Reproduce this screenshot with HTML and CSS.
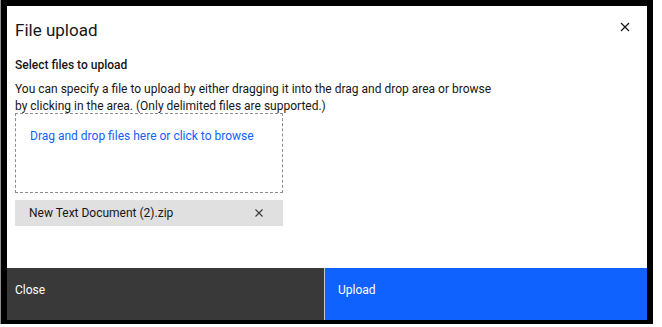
FILE: index.html
```html
<!DOCTYPE html>
<html lang="en">
  <head>
    <meta charset="UTF-8" />
    <meta name="viewport" content="width=device-width, initial-scale=1.0" />
    <title>File upload</title>
    <link rel="stylesheet" href="styles.css">
  </head>
  <body>
    <div class="window">
      <div class="modal">
        <div class="modal-header">
          <h2>File upload</h2>
          <button type="button" class="modal-close" aria-label="Close">
            <svg width="10" height="10" viewBox="0 0 10 10">
              <path d="M1 1L9 9M9 1L1 9" stroke="#161616" stroke-width="1.2" fill="none" />
            </svg>
          </button>
        </div>

        <div class="modal-body">
          <p class="label">Select files to upload</p>
          <p class="helper">
            You can specify a file to upload by either dragging it into the drag and drop area or browse<br />
            by clicking in the area. (Only delimited files are supported.)
          </p>

          <div class="dropzone">
            <span>Drag and drop files here or click to browse</span>
          </div>

          <div class="file-item">
            <span>New Text Document (2).zip</span>
            <button type="button" class="file-remove" aria-label="Remove file">
              <svg width="8" height="8" viewBox="0 0 8 8">
                <path d="M0.5 0.5L7.5 7.5M7.5 0.5L0.5 7.5" stroke="#393939" stroke-width="1.1" fill="none" />
              </svg>
            </button>
          </div>
        </div>

        <div class="modal-footer">
          <button type="button" class="btn btn-secondary">Close</button>
          <button type="button" class="btn btn-primary">Upload</button>
        </div>
      </div>
    </div>
  </body>
</html>
```

FILE: styles.css
```css
* {
  margin: 0;
  padding: 0;
  box-sizing: border-box;
}
body {
  font-family: Roboto, "Noto Sans", sans-serif;
  background-color: #fff;
  color: #161616;
}
.window {
  width: 653px;
  border-left: 1px solid #8d8d8d;
}
.modal {
  display: flex;
  flex-direction: column;
  height: 324px;
  border: 6px solid #000;
  border-bottom-width: 4px;
  background-color: #fff;
}
.modal-header {
  display: flex;
  justify-content: space-between;
  align-items: flex-start;
  padding: 12px 14px 0 8px;
}
h2 {
  font-size: 17px;
  font-weight: 400;
  line-height: 24px;
}
.modal-close {
  border: none;
  background: none;
  padding: 3px;
  margin-top: 1px;
  display: flex;
}
.modal-body {
  flex: 1;
  padding: 0 8px;
}
.label {
  margin-top: 15px;
  font-size: 12px;
  font-weight: 500;
  line-height: 16px;
}
.helper {
  margin-top: 8px;
  font-size: 12px;
  line-height: 17px;
}
.dropzone {
  width: 268px;
  height: 80px;
  margin-top: -2px;
  padding: 14px 14px;
  border: 1px dashed #8d8d8d;
  font-size: 12px;
  line-height: 16px;
  color: #0f62fe;
}
.file-item {
  display: flex;
  justify-content: space-between;
  align-items: center;
  width: 268px;
  height: 26px;
  margin-top: 7px;
  padding: 0 20px 0 14px;
  background-color: #e0e0e0;
  font-size: 12px;
}
.file-remove {
  border: none;
  background: none;
  display: flex;
}
.modal-footer {
  display: flex;
  height: 52px;
}
.btn {
  flex: 1;
  border: none;
  padding: 14px 8px;
  text-align: left;
  font-family: inherit;
  font-size: 12px;
  line-height: 16px;
  color: #fff;
  display: flex;
  align-items: flex-start;
}
.btn-secondary {
  background-color: #393939;
  border-right: 1px solid #c6c6c6;
}
.btn-primary {
  background-color: #0f62fe;
  padding-left: 13px;
}
```
